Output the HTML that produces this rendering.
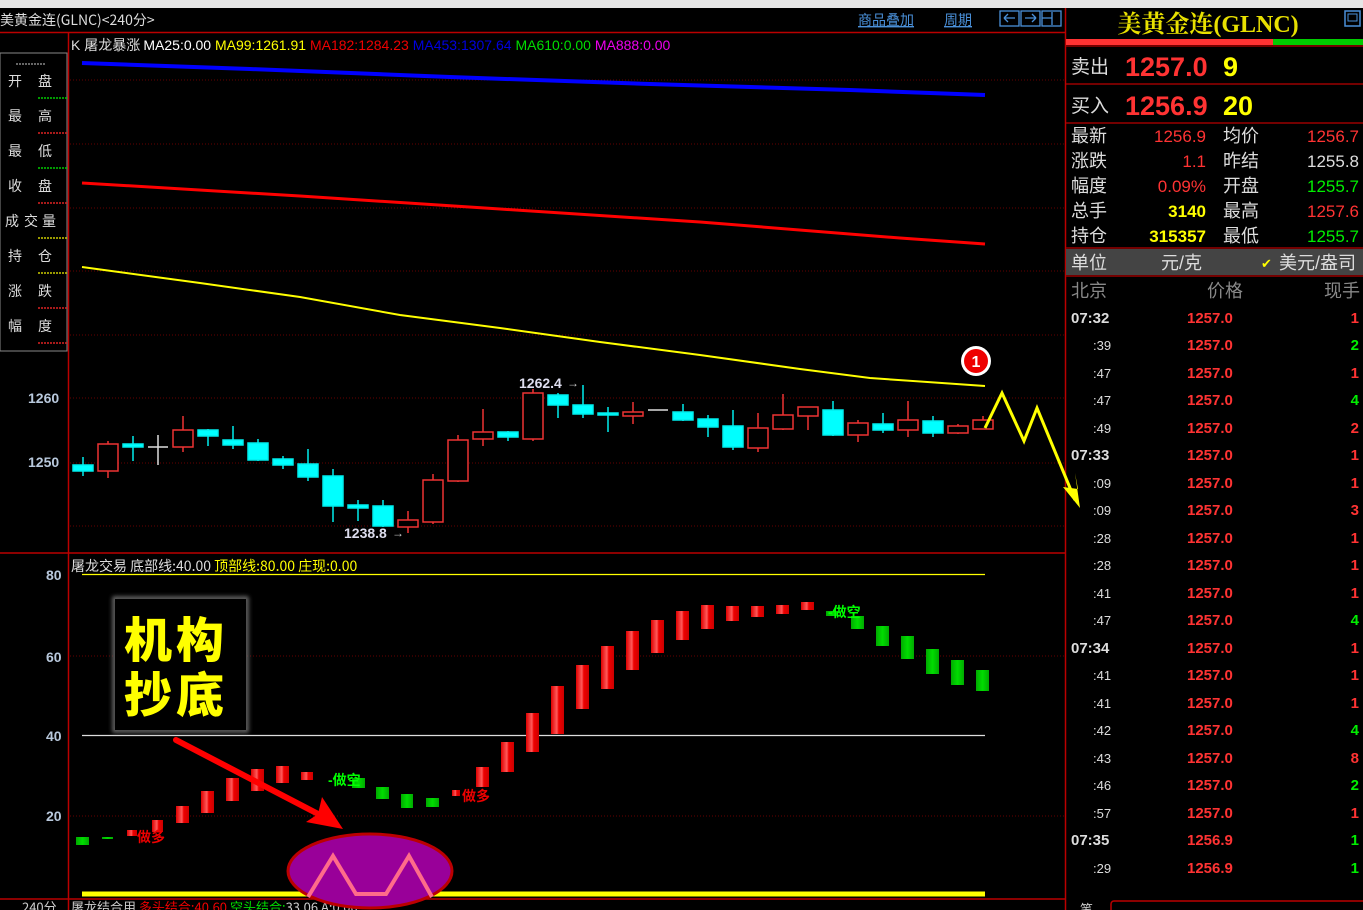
<!DOCTYPE html>
<html><head><meta charset="utf-8"><style>
html,body{margin:0;padding:0;background:#000;width:1363px;height:910px;overflow:hidden}
svg{display:block}
text{font-family:"Liberation Sans","Noto Sans CJK SC",sans-serif}
.cj{font-family:"Noto Sans CJK SC","WenQuanYi Zen Hei",sans-serif}
</style></head><body>
<svg width="1363" height="910" viewBox="0 0 1363 910" xmlns="http://www.w3.org/2000/svg">
<defs>
<linearGradient id="rb" x1="0" x2="1"><stop offset="0" stop-color="#d00"/><stop offset=".45" stop-color="#ff5a5a"/><stop offset=".6" stop-color="#e00"/><stop offset="1" stop-color="#c00"/></linearGradient>
<linearGradient id="gb" x1="0" x2="1"><stop offset="0" stop-color="#0a0"/><stop offset=".5" stop-color="#0d0"/><stop offset="1" stop-color="#0a0"/></linearGradient>
<filter id="glow"><feGaussianBlur stdDeviation="2"/></filter>
</defs>
<rect x="0" y="0" width="1363" height="8" fill="#e6e6e6"/>
<text x="0" y="25" fill="#ddd" font-size="14" class="cj">美黄金连(GLNC)&lt;240分&gt;</text>
<text x="858" y="25" fill="#4a90d9" font-size="14" class="cj" text-decoration="underline">商品叠加</text>
<text x="944" y="25" fill="#4a90d9" font-size="14" class="cj" text-decoration="underline">周期</text>
<g fill="none" stroke="#4a90d9" stroke-width="1.3">
<rect x="1000" y="11" width="19" height="15"/><rect x="1021" y="11" width="19" height="15"/><rect x="1042" y="11" width="19" height="15"/>
<path d="M1004 18h11M1004 18l4-4M1004 18l4 4M1036 18h-11M1036 18l-4-4M1036 18l-4 4M1052 12v13M1042 18h10"/>
</g>
<line x1="0" y1="32.5" x2="1065" y2="32.5" stroke="#b00" stroke-width="1.5"/>
<line x1="68.5" y1="32" x2="68.5" y2="910" stroke="#b00" stroke-width="1.5"/>
<line x1="1065.5" y1="8" x2="1065.5" y2="910" stroke="#b00" stroke-width="1.5"/>
<rect x="0" y="53" width="67" height="298" fill="none" stroke="#888" stroke-width="1"/>
<line x1="16" y1="64" x2="46" y2="64" stroke="#ccc" stroke-dasharray="2 1"/>
<g fill="#ddd" font-size="14" class="cj">
<text x="8" y="86">开</text><text x="38" y="86">盘</text>
<text x="8" y="121">最</text><text x="38" y="121">高</text>
<text x="8" y="156">最</text><text x="38" y="156">低</text>
<text x="8" y="191">收</text><text x="38" y="191">盘</text>
<text x="5" y="226">成</text><text x="24" y="226">交</text><text x="42" y="226">量</text>
<text x="8" y="261">持</text><text x="38" y="261">仓</text>
<text x="8" y="296">涨</text><text x="38" y="296">跌</text>
<text x="8" y="331">幅</text><text x="38" y="331">度</text>
</g>
<g stroke-width="1.5" stroke-dasharray="2 1">
<line x1="38" y1="98" x2="67" y2="98" stroke="#0c0"/><line x1="38" y1="133" x2="67" y2="133" stroke="#d22"/>
<line x1="38" y1="168" x2="67" y2="168" stroke="#0c0"/><line x1="38" y1="203" x2="67" y2="203" stroke="#d22"/>
<line x1="38" y1="238" x2="67" y2="238" stroke="#cc0"/><line x1="38" y1="273" x2="67" y2="273" stroke="#cc0"/>
<line x1="38" y1="308" x2="67" y2="308" stroke="#d22"/><line x1="38" y1="343" x2="67" y2="343" stroke="#d22"/>
</g>
<g stroke="#600" stroke-width="1" stroke-dasharray="1 2">
<line x1="70" y1="80" x2="1064" y2="80"/><line x1="70" y1="144" x2="1064" y2="144"/><line x1="70" y1="208" x2="1064" y2="208"/>
<line x1="70" y1="271" x2="1064" y2="271"/><line x1="70" y1="335" x2="1064" y2="335"/><line x1="70" y1="398" x2="1064" y2="398"/>
<line x1="70" y1="463" x2="1064" y2="463"/><line x1="70" y1="526" x2="1064" y2="526"/>
<line x1="70" y1="656" x2="1064" y2="656"/><line x1="70" y1="816" x2="1064" y2="816"/>
</g>
<g fill="#b8c8dc" font-size="14" font-weight="bold">
<text x="28" y="403">1260</text><text x="28" y="467">1250</text>
<text x="46" y="580">80</text><text x="46" y="662">60</text><text x="46" y="741">40</text><text x="46" y="821">20</text>
</g>
<text x="71" y="50" font-size="14"><tspan fill="#ddd">K  </tspan><tspan fill="#ddd" class="cj">屠龙暴涨 </tspan><tspan fill="#fff">MA25:0.00 </tspan><tspan fill="#ff0">MA99:1261.91 </tspan><tspan fill="#e00">MA182:1284.23 </tspan><tspan fill="#0000e0">MA453:1307.64 </tspan><tspan fill="#0d0">MA610:0.00 </tspan><tspan fill="#e0e">MA888:0.00</tspan></text>
<polyline points="82,63 250,69 450,77 650,84 850,90 985,95" fill="none" stroke="#0000ff" stroke-width="4"/>
<polyline points="82,183 300,196 500,209 700,222 900,238 985,244" fill="none" stroke="#f00" stroke-width="3"/>
<polyline points="82,267 200,283 300,297 400,315 500,328 600,342 700,355 800,369 870,378 985,386" fill="none" stroke="#ff0" stroke-width="2"/>
<g stroke-width="1.5">
<g stroke="#0ee" fill="#0ff">
<line x1="83" y1="457" x2="83" y2="476"/><rect x="73" y="465" width="20" height="6"/>
<line x1="133" y1="436" x2="133" y2="461"/><rect x="123" y="444" width="20" height="3"/>
<line x1="208" y1="429" x2="208" y2="446"/><rect x="198" y="430" width="20" height="6"/>
<line x1="233" y1="426" x2="233" y2="449"/><rect x="223" y="440" width="20" height="5"/>
<line x1="258" y1="439" x2="258" y2="461"/><rect x="248" y="443" width="20" height="17"/>
<line x1="283" y1="456" x2="283" y2="469"/><rect x="273" y="459" width="20" height="6"/>
<line x1="308" y1="449" x2="308" y2="481"/><rect x="298" y="464" width="20" height="13"/>
<line x1="333" y1="469" x2="333" y2="522"/><rect x="323" y="476" width="20" height="30"/>
<line x1="358" y1="500" x2="358" y2="521"/><rect x="348" y="505" width="20" height="3"/>
<line x1="383" y1="500" x2="383" y2="527"/><rect x="373" y="506" width="20" height="20"/>
<line x1="508" y1="431" x2="508" y2="441"/><rect x="498" y="432" width="20" height="5"/>
<line x1="558" y1="393" x2="558" y2="418"/><rect x="548" y="395" width="20" height="10"/>
<line x1="583" y1="385" x2="583" y2="418"/><rect x="573" y="405" width="20" height="9"/>
<line x1="608" y1="407" x2="608" y2="432"/><rect x="598" y="413" width="20" height="2"/>
<line x1="683" y1="404" x2="683" y2="421"/><rect x="673" y="412" width="20" height="8"/>
<line x1="708" y1="415" x2="708" y2="437"/><rect x="698" y="419" width="20" height="8"/>
<line x1="733" y1="410" x2="733" y2="450"/><rect x="723" y="426" width="20" height="21"/>
<line x1="833" y1="401" x2="833" y2="436"/><rect x="823" y="410" width="20" height="25"/>
<line x1="883" y1="413" x2="883" y2="433"/><rect x="873" y="424" width="20" height="6"/>
<line x1="933" y1="416" x2="933" y2="437"/><rect x="923" y="421" width="20" height="12"/>
</g>
<g stroke="#e33" fill="none">
<line x1="108" y1="441" x2="108" y2="478"/><rect x="98" y="444" width="20" height="27" fill="#000"/>
<line x1="183" y1="416" x2="183" y2="452"/><rect x="173" y="430" width="20" height="17" fill="#000"/>
<line x1="408" y1="511" x2="408" y2="533"/><rect x="398" y="520" width="20" height="7" fill="#000"/>
<line x1="433" y1="474" x2="433" y2="524"/><rect x="423" y="480" width="20" height="42" fill="#000"/>
<line x1="458" y1="435" x2="458" y2="482"/><rect x="448" y="440" width="20" height="41" fill="#000"/>
<line x1="483" y1="409" x2="483" y2="446"/><rect x="473" y="432" width="20" height="7" fill="#000"/>
<line x1="533" y1="389" x2="533" y2="441"/><rect x="523" y="393" width="20" height="46" fill="#000"/>
<line x1="633" y1="402" x2="633" y2="424"/><rect x="623" y="412" width="20" height="4" fill="#000"/>
<line x1="758" y1="413" x2="758" y2="452"/><rect x="748" y="428" width="20" height="20" fill="#000"/>
<line x1="783" y1="394" x2="783" y2="430"/><rect x="773" y="415" width="20" height="14" fill="#000"/>
<line x1="808" y1="407" x2="808" y2="430"/><rect x="798" y="407" width="20" height="9" fill="#000"/>
<line x1="858" y1="420" x2="858" y2="442"/><rect x="848" y="423" width="20" height="12" fill="#000"/>
<line x1="908" y1="401" x2="908" y2="437"/><rect x="898" y="420" width="20" height="10" fill="#000"/>
<line x1="958" y1="424" x2="958" y2="434"/><rect x="948" y="426" width="20" height="7" fill="#000"/>
<line x1="983" y1="416" x2="983" y2="429"/><rect x="973" y="420" width="20" height="9" fill="#000"/>
</g>
<g stroke="#ddd"><line x1="158" y1="435" x2="158" y2="465"/><line x1="148" y1="447" x2="168" y2="447"/><line x1="648" y1="410" x2="668" y2="410"/></g>
</g>
<text x="519" y="388" fill="#dde" font-size="14" font-weight="bold">1262.4</text><text x="567" y="387" fill="#ccc" font-size="12">→</text>
<text x="344" y="538" fill="#dde" font-size="14" font-weight="bold">1238.8</text><text x="392" y="537" fill="#ccc" font-size="12">→</text>
<circle cx="976" cy="361" r="15" fill="#fff"/><circle cx="976" cy="361" r="12" fill="#e00"/>
<text x="976" y="367" fill="#fff" font-size="16" font-weight="bold" text-anchor="middle">1</text>
<polyline points="985,428 1002,393 1024,441 1037,408 1075,500" fill="none" stroke="#ff0" stroke-width="3"/>
<polygon points="1080,508 1063,487 1078,489 1075,473" fill="#ff0"/>
<line x1="0" y1="553" x2="1065" y2="553" stroke="#b00" stroke-width="1.5"/>
<text x="71" y="571" font-size="14" class="cj"><tspan fill="#ddd">屠龙交易 底部线:40.00 </tspan><tspan fill="#ff0">顶部线:80.00 庄现:0.00</tspan></text>
<line x1="82" y1="574.5" x2="985" y2="574.5" stroke="#ff0" stroke-width="1.2"/>
<line x1="82" y1="735.5" x2="985" y2="735.5" stroke="#ddd" stroke-width="1.2"/>
<g fill="url(#rb)">
<rect x="127" y="830" width="10" height="6"/><rect x="152" y="820" width="11" height="12"/>
<rect x="176" y="806" width="13" height="17"/><rect x="201" y="791" width="13" height="22"/>
<rect x="226" y="778" width="13" height="23"/><rect x="251" y="769" width="13" height="22"/>
<rect x="276" y="766" width="13" height="17"/><rect x="301" y="772" width="12" height="8"/>
<rect x="452" y="790" width="8" height="6"/><rect x="476" y="767" width="13" height="20"/>
<rect x="501" y="742" width="13" height="30"/><rect x="526" y="713" width="13" height="39"/>
<rect x="551" y="686" width="13" height="48"/><rect x="576" y="665" width="13" height="44"/>
<rect x="601" y="646" width="13" height="43"/><rect x="626" y="631" width="13" height="39"/>
<rect x="651" y="620" width="13" height="33"/><rect x="676" y="611" width="13" height="29"/>
<rect x="701" y="605" width="13" height="24"/><rect x="726" y="606" width="13" height="15"/>
<rect x="751" y="606" width="13" height="11"/><rect x="776" y="605" width="13" height="9"/>
<rect x="801" y="602" width="13" height="8"/>
</g>
<g fill="url(#gb)">
<rect x="76" y="837" width="13" height="8"/><rect x="102" y="837" width="11" height="2"/>
<rect x="352" y="778" width="13" height="10"/><rect x="376" y="787" width="13" height="12"/>
<rect x="401" y="794" width="12" height="14"/><rect x="426" y="798" width="13" height="9"/>
<rect x="826" y="611" width="12" height="5"/><rect x="851" y="616" width="13" height="13"/>
<rect x="876" y="626" width="13" height="20"/><rect x="901" y="636" width="13" height="23"/>
<rect x="926" y="649" width="13" height="25"/><rect x="951" y="660" width="13" height="25"/>
<rect x="976" y="670" width="13" height="21"/>
</g>
<g font-size="14" font-weight="bold" class="cj">
<text x="137" y="842" fill="#e00">做多</text><text x="462" y="801" fill="#e00">做多</text>
<text x="328" y="785" fill="#0f0">-做空</text><text x="828" y="617" fill="#0f0">-做空</text>
</g>
<rect x="114" y="598" width="133" height="133" fill="#000" stroke="#777" stroke-width="3" filter="url(#glow)"/>
<rect x="115" y="599" width="131" height="131" fill="#000"/>
<g fill="#ff0" font-size="48" font-weight="900" class="cj" letter-spacing="4">
<text x="124" y="657">机构</text><text x="124" y="712">抄底</text>
</g>
<line x1="176" y1="740" x2="322" y2="816" stroke="#f00" stroke-width="6" stroke-linecap="round"/>
<polygon points="343,829 306,822 318,814 322,797" fill="#f00"/>
<line x1="82" y1="894" x2="985" y2="894" stroke="#ff0" stroke-width="5"/>
<line x1="0" y1="899" x2="1065" y2="899" stroke="#b00" stroke-width="1.5"/>
<text x="22" y="912" fill="#ccc" font-size="13" class="cj">240分</text>
<text x="71" y="912" font-size="13" class="cj"><tspan fill="#ccc">屠龙结合用 </tspan><tspan fill="#e00">多头结合:40.60 </tspan><tspan fill="#0d0">空头结合:</tspan><tspan fill="#ccc">33.06 A:0.00</tspan></text>
<ellipse cx="370" cy="871" rx="82" ry="37" fill="#990099" stroke="#b00" stroke-width="3"/>
<polyline points="308,897 333,856 356,894 386,894 409,856 432,897" fill="none" stroke="#ff6b8a" stroke-width="4"/>

<text x="1208" y="32" fill="#e8e000" font-size="24" font-weight="bold" text-anchor="middle" style="font-family:'Liberation Serif','Noto Serif CJK SC',serif">美黄金连(GLNC)</text>
<rect x="1345" y="11" width="15" height="15" fill="none" stroke="#4a90d9" stroke-width="1.5"/><rect x="1348" y="14" width="9" height="7" fill="none" stroke="#4a90d9"/>
<rect x="1066" y="39" width="207" height="6" fill="#f33"/><rect x="1273" y="39" width="90" height="6" fill="#0c0"/>
<g stroke="#900" stroke-width="1.5">
<line x1="1066" y1="46" x2="1363" y2="46"/><line x1="1066" y1="84" x2="1363" y2="84"/><line x1="1066" y1="123" x2="1363" y2="123"/>
<line x1="1066" y1="248" x2="1363" y2="248"/><line x1="1066" y1="276" x2="1363" y2="276"/>
</g>
<text x="1071" y="73" fill="#ddd" font-size="19" class="cj">卖出</text>
<text x="1125" y="76" fill="#f33" font-size="27" font-weight="bold">1257.0</text>
<text x="1223" y="76" fill="#ff0" font-size="27" font-weight="bold">9</text>
<text x="1071" y="112" fill="#ddd" font-size="19" class="cj">买入</text>
<text x="1125" y="115" fill="#f33" font-size="27" font-weight="bold">1256.9</text>
<text x="1223" y="115" fill="#ff0" font-size="27" font-weight="bold">20</text>
<g font-size="18" class="cj" fill="#ddd">
<text x="1071" y="142">最新</text><text x="1071" y="167">涨跌</text><text x="1071" y="192">幅度</text><text x="1071" y="217">总手</text><text x="1071" y="242">持仓</text>
<text x="1223" y="142">均价</text><text x="1223" y="167">昨结</text><text x="1223" y="192">开盘</text><text x="1223" y="217">最高</text><text x="1223" y="242">最低</text>
</g>
<g font-size="17" text-anchor="end">
<text x="1206" y="142" fill="#f33">1256.9</text><text x="1206" y="167" fill="#f33">1.1</text><text x="1206" y="192" fill="#f33">0.09%</text>
<text x="1206" y="217" fill="#ff0" font-weight="bold">3140</text><text x="1206" y="242" fill="#ff0" font-weight="bold">315357</text>
<text x="1359" y="142" fill="#f33">1256.7</text><text x="1359" y="167" fill="#ddd">1255.8</text><text x="1359" y="192" fill="#0e0">1255.7</text>
<text x="1359" y="217" fill="#f33">1257.6</text><text x="1359" y="242" fill="#0e0">1255.7</text>
</g>
<rect x="1066" y="249" width="297" height="26" fill="#444"/>
<g font-size="18" class="cj" fill="#ddd">
<text x="1071" y="269">单位</text><text x="1161" y="269">元/克</text><text x="1279" y="269">美元/盎司</text>
</g>
<text x="1261" y="268" fill="#ff0" font-size="13">✔</text>
<g font-size="18" class="cj" fill="#888">
<text x="1071" y="297">北京</text><text x="1207" y="297">价格</text><text x="1324" y="297">现手</text>
</g>
<g font-size="15" font-weight="bold" fill="#f33">
<text x="1187" y="323">1257.0</text><text x="1187" y="350">1257.0</text><text x="1187" y="378">1257.0</text><text x="1187" y="405">1257.0</text>
<text x="1187" y="433">1257.0</text><text x="1187" y="460">1257.0</text><text x="1187" y="488">1257.0</text><text x="1187" y="515">1257.0</text>
<text x="1187" y="543">1257.0</text><text x="1187" y="570">1257.0</text><text x="1187" y="598">1257.0</text><text x="1187" y="625">1257.0</text>
<text x="1187" y="653">1257.0</text><text x="1187" y="680">1257.0</text><text x="1187" y="708">1257.0</text><text x="1187" y="735">1257.0</text>
<text x="1187" y="763">1257.0</text><text x="1187" y="790">1257.0</text><text x="1187" y="818">1257.0</text><text x="1187" y="845">1256.9</text>
<text x="1187" y="873">1256.9</text>
</g>
<g fill="#ddd">
<g font-size="15" font-weight="bold"><text x="1071" y="323">07:32</text><text x="1071" y="460">07:33</text><text x="1071" y="653">07:34</text><text x="1071" y="845">07:35</text></g>
<g font-size="13"><text x="1093" y="350">:39</text><text x="1093" y="378">:47</text><text x="1093" y="405">:47</text><text x="1093" y="433">:49</text>
<text x="1093" y="488">:09</text><text x="1093" y="515">:09</text><text x="1093" y="543">:28</text><text x="1093" y="570">:28</text><text x="1093" y="598">:41</text><text x="1093" y="625">:47</text>
<text x="1093" y="680">:41</text><text x="1093" y="708">:41</text><text x="1093" y="735">:42</text><text x="1093" y="763">:43</text><text x="1093" y="790">:46</text><text x="1093" y="818">:57</text><text x="1093" y="873">:29</text></g>
</g>
<g font-size="15" font-weight="bold" text-anchor="end">
<text x="1359" y="323" fill="#f33">1</text><text x="1359" y="350" fill="#0e0">2</text><text x="1359" y="378" fill="#f33">1</text><text x="1359" y="405" fill="#0e0">4</text>
<text x="1359" y="433" fill="#f33">2</text><text x="1359" y="460" fill="#f33">1</text><text x="1359" y="488" fill="#f33">1</text><text x="1359" y="515" fill="#f33">3</text>
<text x="1359" y="543" fill="#f33">1</text><text x="1359" y="570" fill="#f33">1</text><text x="1359" y="598" fill="#f33">1</text><text x="1359" y="625" fill="#0e0">4</text>
<text x="1359" y="653" fill="#f33">1</text><text x="1359" y="680" fill="#f33">1</text><text x="1359" y="708" fill="#f33">1</text><text x="1359" y="735" fill="#0e0">4</text>
<text x="1359" y="763" fill="#f33">8</text><text x="1359" y="790" fill="#0e0">2</text><text x="1359" y="818" fill="#f33">1</text><text x="1359" y="845" fill="#0e0">1</text>
<text x="1359" y="873" fill="#0e0">1</text>
</g>
<text x="1080" y="914" fill="#ccc" font-size="13" class="cj">笔</text>
<rect x="1111" y="901" width="260" height="20" rx="3" fill="none" stroke="#b00" stroke-width="1.5"/>
</svg>
</body></html>
